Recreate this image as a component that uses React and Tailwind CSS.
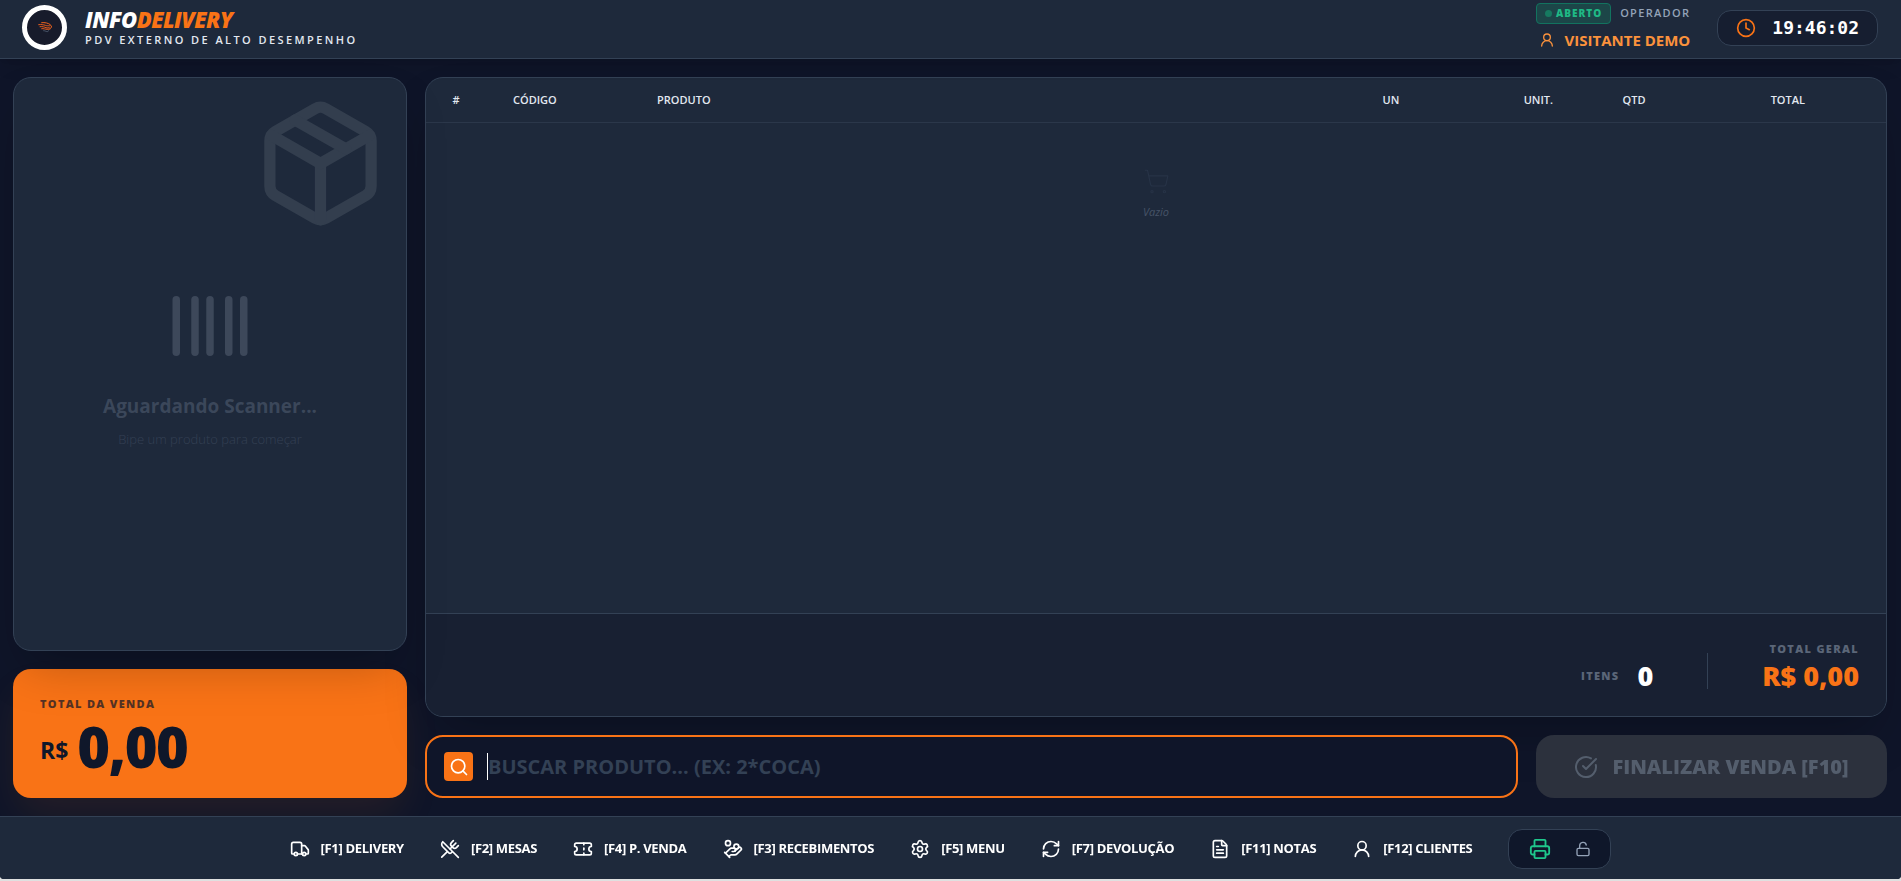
import {
  Barcode,
  CircleCheckBig,
  Clock,
  FileText,
  HandCoins,
  LockOpen,
  Package,
  Printer,
  RefreshCw,
  Search,
  Settings,
  ShoppingCart,
  Ticket,
  Truck,
  UserRound,
  UtensilsCrossed
} from 'lucide-react'

const shortcuts = [
  { key: 'F1', label: 'DELIVERY', icon: Truck },
  { key: 'F2', label: 'MESAS', icon: UtensilsCrossed },
  { key: 'F4', label: 'P. VENDA', icon: Ticket },
  { key: 'F3', label: 'RECEBIMENTOS', icon: HandCoins },
  { key: 'F5', label: 'MENU', icon: Settings },
  { key: 'F7', label: 'DEVOLUÇÃO', icon: RefreshCw },
  { key: 'F11', label: 'NOTAS', icon: FileText },
  { key: 'F12', label: 'CLIENTES', icon: UserRound }
]

const items = []

const formatMoney = (value) => value.toFixed(2).replace('.', ',')

function Logo() {
  return (
    <div className="flex size-[45px] items-center justify-center rounded-full border-[5px] border-white bg-[#171b2b]">
      <svg viewBox="0 0 42 32" className="w-[14px]" fill="none" strokeLinecap="round" strokeWidth="3">
        <path d="M11 2c10-1 19 1 26 6l4 7-6 6" stroke="#f0641e" />
        <path d="M2 8c8-1 14 0 20 2s9 1 12 1" stroke="#e85d1c" />
        <path d="M6 14c8-1 13 1 18 3s8 0 10-1" stroke="#e85d1c" />
        <path d="M11 20c6-1 11 2 16 2l9-1" stroke="#e85d1c" />
        <path d="M17 26c5 0 7 3 11 3l4-3" stroke="#64748b" strokeWidth="2" />
      </svg>
    </div>
  )
}

function Header() {
  return (
    <header className="relative z-20 flex h-[59px] shrink-0 items-center justify-between border-b border-[#334155] bg-[#1e293b] pr-[23px] pb-[3px] pl-[22px] shadow-lg">
      <div className="flex items-center gap-[18px]">
        <Logo />
        <div>
          <h1 className="text-[22px] leading-[25px] font-black tracking-tight text-white italic">
            INFO<span className="text-[#f97316]">DELIVERY</span>
          </h1>
          <p className="text-[11px] leading-[16px] font-semibold tracking-[0.22em] text-[#e2e8f0]">
            PDV EXTERNO DE ALTO DESEMPENHO
          </p>
        </div>
      </div>

      <div className="flex items-center gap-[27px]">
        <div>
          <div className="flex items-center justify-end gap-[9px]">
            <span className="flex h-[21px] items-center gap-1 rounded-sm border border-[#12735f] bg-[#1c4648] px-2 text-[10px] font-black tracking-widest text-[#1fb985]">
              <span className="size-[7px] rounded-full bg-[#167a60]" />
              ABERTO
            </span>
            <span className="text-[11px] font-semibold tracking-[0.12em] text-[#94a3b8]">OPERADOR</span>
          </div>
          <div className="mt-[3px] flex items-center justify-end gap-[10px] text-[#fb923c]">
            <UserRound className="size-4" />
            <span className="text-[15px] leading-[26px] font-bold">VISITANTE DEMO</span>
          </div>
        </div>
        <div className="flex h-9 items-center gap-4 rounded-[14px] border border-[#334155] bg-[#161e30] px-[18px]">
          <Clock className="size-5 text-[#f97316]" />
          <time className="font-['DejaVu_Sans_Mono',monospace] text-[18px] font-bold text-white">19:46:02</time>
        </div>
      </div>
    </header>
  )
}

function ScannerCard() {
  return (
    <section className="relative z-10 flex flex-1 flex-col items-center justify-center rounded-[18px] border border-[#334155] bg-[#1e293b] shadow-2xl">
      <Package className="absolute top-[18px] right-[18px] size-[135px] text-[#333e4e]" />
      <Barcode className="size-[90px] text-[#3d485a]" />
      <h2 className="mt-[21px] text-[19px] leading-[28px] font-bold text-[#3b475a]">Aguardando Scanner...</h2>
      <p className="mt-[10px] text-[13px] leading-[18px] font-light text-[#344054]">Bipe um produto para começar</p>
    </section>
  )
}

function SaleTotal({ total }) {
  return (
    <section className="h-[129px] rounded-[18px] bg-[#f97316] px-[27px] pt-[27px] text-[#0f172a] shadow-[0_20px_40px_-6px_rgba(249,115,22,0.1)]">
      <p className="text-[11px] leading-[16px] font-black tracking-[0.12em] opacity-70">TOTAL DA VENDA</p>
      <p className="flex items-center gap-[9px]">
        <span className="pt-2 text-[23px] font-bold">R$</span>
        <span className="text-[56px] leading-[68px] font-black tracking-tight">{formatMoney(total)}</span>
      </p>
    </section>
  )
}

function ItemsPanel({ total }) {
  return (
    <section className="flex flex-1 flex-col overflow-hidden rounded-[18px] border border-[#334155] bg-[#1e293b] shadow-2xl">
      <div className="flex-1">
        <table className="w-full table-fixed text-left text-[11px]">
          <thead className="text-[#e2e8f0]">
            <tr className="h-11 border-b border-[#334155]/60">
              <th className="w-[60px] text-center font-semibold">#</th>
              <th className="w-36 px-[27px] font-semibold">CÓDIGO</th>
              <th className="px-[27px] font-semibold">PRODUTO</th>
              <th className="w-[90px] text-center font-semibold">UN</th>
              <th className="w-36 px-[27px] text-right font-semibold">UNIT.</th>
              <th className="w-[108px] text-center font-semibold">QTD</th>
              <th className="w-36 px-[27px] text-right font-semibold">TOTAL</th>
              <th className="w-[54px]" aria-label="Ações" />
            </tr>
          </thead>
          <tbody>
            {items.length === 0 && (
              <tr>
                <td colSpan={8} className="pt-[45px] text-center text-[#475468] italic">
                  <ShoppingCart className="mx-auto mb-[9px] size-[27px] text-[#273347]" strokeWidth={1} />
                  Vazio
                </td>
              </tr>
            )}
          </tbody>
        </table>
      </div>

      <div className="flex items-end justify-end gap-[54px] border-t border-[#334155] bg-[#182032] p-[27px]">
        <div className="flex items-center gap-[18px]">
          <span className="text-[11px] font-black tracking-[0.12em] text-[#5b6678]">ITENS</span>
          <span className="text-[27px] leading-[26px] font-black text-white">{items.length}</span>
        </div>
        <div className="h-9 w-px bg-[#334155]" />
        <div className="text-right">
          <p className="text-[11px] leading-[16px] font-black tracking-[0.12em] text-[#5b6678]">TOTAL GERAL</p>
          <p className="mt-[6px] text-[27px] leading-[26px] font-black text-[#f97316]">R$ {formatMoney(total)}</p>
        </div>
      </div>
    </section>
  )
}

function SearchBar() {
  return (
    <div className="flex h-[63px] gap-[18px]">
      <label className="flex flex-1 items-center rounded-[18px] border-2 border-[#f97316] bg-[#0f1529] px-[17px]">
        <span className="mr-[14px] flex size-[29px] items-center justify-center rounded bg-[#f97316]">
          <Search className="size-5 text-white" />
        </span>
        {/* caret */}
        <span className="h-[27px] w-px bg-white" />
        <input
          type="text"
          autoFocus
          aria-label="Buscar produto"
          placeholder="BUSCAR PRODUTO... (EX: 2*COCA)"
          className="h-full flex-1 bg-transparent text-[20px] font-bold text-white caret-transparent outline-none placeholder:text-[#334155]"
        />
      </label>
      <button
        type="button"
        disabled
        className="flex w-[351px] items-center justify-center gap-[14px] rounded-[18px] bg-[#2c313d] text-[20px] font-black text-[#545e6d]"
      >
        <CircleCheckBig className="size-6" />
        FINALIZAR VENDA [F10]
      </button>
    </div>
  )
}

function Footer() {
  return (
    <footer className="flex h-[63px] shrink-0 items-center justify-center gap-9 border-t border-[#334155] bg-[#1e293b] pt-px">
      {shortcuts.map(({ key, label, icon: Icon }) => (
        <button
          key={key}
          type="button"
          className="flex items-center gap-[11px] text-[13px] font-bold tracking-tight whitespace-nowrap text-white"
        >
          <Icon className="size-5" />
          [{key}] {label}
        </button>
      ))}
      <div className="flex h-10 w-[103px] items-center justify-center gap-6 rounded-[14px] border border-[#334155] bg-[#0f172a]">
        <button type="button" aria-label="Impressora">
          <Printer className="size-[22px] text-[#1fc78c]" />
        </button>
        <button type="button" aria-label="Gaveta">
          <LockOpen className="size-4 text-[#94a3b8]" />
        </button>
      </div>
    </footer>
  )
}

export default function App() {
  const total = items.reduce((sum, item) => sum + item.total, 0)

  return (
    <div className="h-screen bg-[#dfe0e0] pb-[2px] font-['Open_Sans','Noto_Sans',sans-serif]">
      <div className="flex h-full flex-col overflow-hidden rounded-b-[4px] bg-[#0f1529]">
        <Header />
        <main className="flex flex-1 gap-[18px] py-[18px] pr-[14px] pl-[13px]">
          <aside className="flex w-[394px] shrink-0 flex-col gap-[18px]">
            <ScannerCard />
            <SaleTotal total={total} />
          </aside>
          <div className="flex flex-1 flex-col gap-[18px]">
            <ItemsPanel total={total} />
            <SearchBar />
          </div>
        </main>
        <Footer />
      </div>
    </div>
  )
}
